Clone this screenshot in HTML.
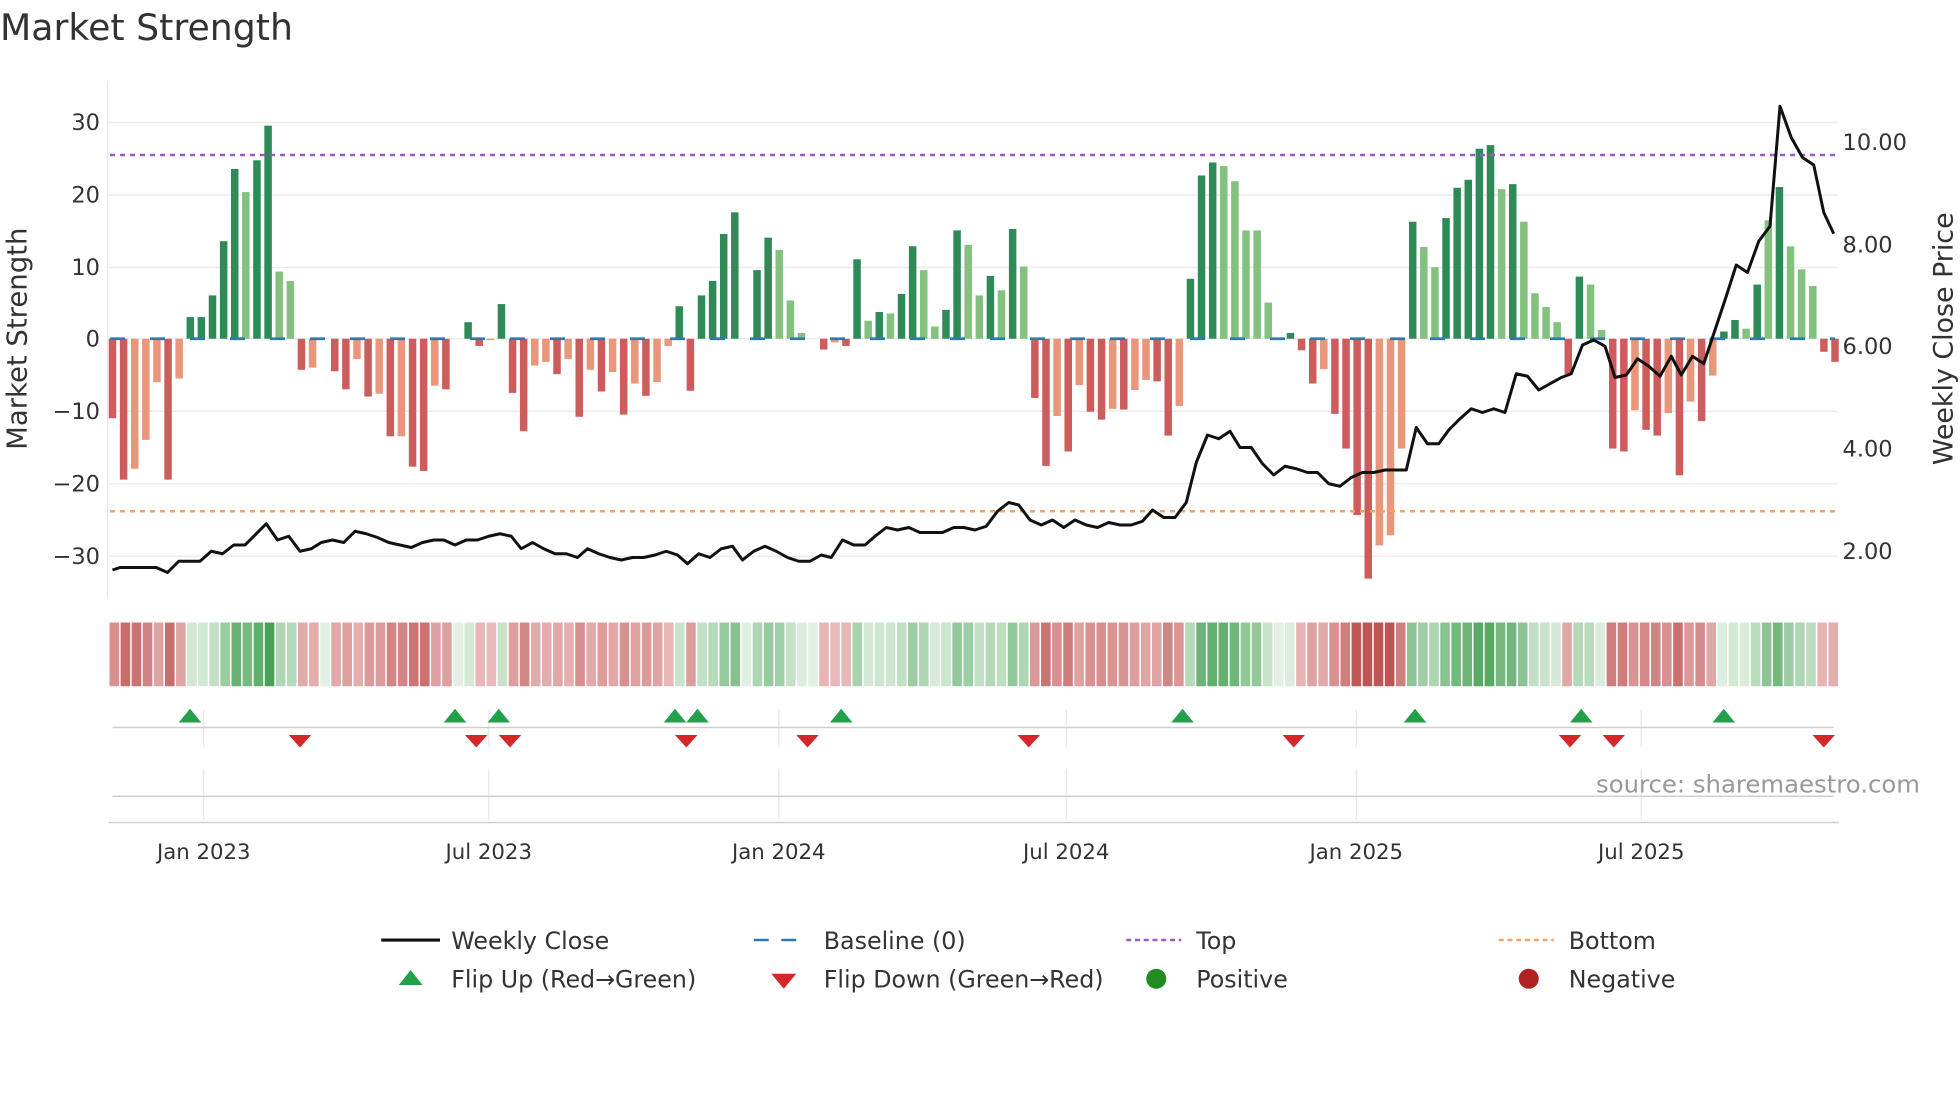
<!DOCTYPE html>
<html><head><meta charset="utf-8"><style>
html,body{margin:0;padding:0;background:#fff;width:1960px;height:1102px;overflow:hidden}
svg{display:block;font-family:"DejaVu Sans","Liberation Sans",sans-serif}
</style></head><body>
<svg id="s" width="1960" height="1102" viewBox="0 0 1568 881.6" xmlns="http://www.w3.org/2000/svg">
<text x="0" y="32" font-size="29" fill="#333">Market Strength</text>
<g id="grid" stroke="#ececf0" stroke-width="1.2"></g>
<line x1="86" y1="65" x2="86" y2="478" stroke="#e6e6e6" stroke-width="1"/>
<g font-size="18" fill="#333" text-anchor="end">
<text x="80" y="104">30</text><text x="80" y="162">20</text><text x="80" y="220">10</text><text x="80" y="277">0</text>
<text x="80" y="335">−10</text><text x="80" y="393">−20</text><text x="80" y="451">−30</text></g>
<g font-size="18" fill="#333">
<text x="1474" y="120">10.00</text><text x="1474" y="202">8.00</text><text x="1474" y="283">6.00</text><text x="1474" y="365">4.00</text><text x="1474" y="447">2.00</text></g>
<text transform="translate(21,271) rotate(-90)" font-size="22" fill="#333" text-anchor="middle">Market Strength</text>
<text transform="translate(1562,271) rotate(-90)" font-size="21.5" fill="#333" text-anchor="middle">Weekly Close Price</text>
<g id="bars"></g>
<line x1="88" y1="271" x2="1468" y2="271" stroke="#2b7bb0" stroke-width="2.2" stroke-dasharray="12,20"/>
<line x1="88" y1="124" x2="1470" y2="124" stroke="#9b59d0" stroke-width="2" stroke-dasharray="4,4"/>
<line x1="88" y1="409" x2="1470" y2="409" stroke="#f4a460" stroke-width="2" stroke-dasharray="4,4"/>
<polyline id="price" fill="none" stroke="#111" stroke-width="2.4" stroke-linejoin="round"/>
<g id="strip"></g>
<g id="vg" stroke="#e8e8e8" stroke-width="1"></g>
<line x1="90" y1="582" x2="1467" y2="582" stroke="#cfcfcf" stroke-width="1.2"/>
<line x1="90" y1="637" x2="1467" y2="637" stroke="#cfcfcf" stroke-width="1.2"/>
<line x1="87" y1="658" x2="1471" y2="658" stroke="#cfcfcf" stroke-width="1.2"/>
<g id="flips"></g>
<text x="1536" y="634" font-size="19.5" fill="#999" text-anchor="end">source: sharemaestro.com</text>
<g font-size="17" fill="#333" text-anchor="middle">
<text x="163" y="687">Jan 2023</text><text x="391" y="687">Jul 2023</text><text x="623" y="687">Jan 2024</text>
<text x="853" y="687">Jul 2024</text><text x="1085" y="687">Jan 2025</text><text x="1313" y="687">Jul 2025</text></g>
<g font-size="19" fill="#333">
<line x1="305" y1="752" x2="352" y2="752" stroke="#111" stroke-width="2.5"/>
<text x="361" y="759">Weekly Close</text>
<line x1="603" y1="752" x2="647" y2="752" stroke="#2b7bb0" stroke-width="2" stroke-dasharray="12,10"/>
<text x="659" y="759">Baseline (0)</text>
<line x1="901" y1="752" x2="945" y2="752" stroke="#9b59d0" stroke-width="2" stroke-dasharray="4,3"/>
<text x="957" y="759">Top</text>
<line x1="1199" y1="752" x2="1243" y2="752" stroke="#f4a460" stroke-width="2" stroke-dasharray="4,3"/>
<text x="1255" y="759">Bottom</text>
<polygon points="319,788 338,788 328.5,776" fill="#22a04a"/>
<text x="361" y="790">Flip Up (Red→Green)</text>
<polygon points="617,779 637,779 627,791" fill="#d62728"/>
<text x="659" y="790">Flip Down (Green→Red)</text>
<circle cx="925" cy="783" r="8" fill="#228b22"/>
<text x="957" y="790">Positive</text>
<circle cx="1223" cy="783" r="8" fill="#b22222"/>
<text x="1255" y="790">Negative</text>
</g>
</svg>
<script>
var NS="http://www.w3.org/2000/svg";
function el(p,t,a){var e=document.createElementNS(NS,t);for(var k in a)e.setAttribute(k,a[k]);document.getElementById(p).appendChild(e);return e;}
[98,156,214,271,329,387,445].forEach(function(y){el("grid","line",{x1:87,y1:y,x2:1470,y2:y});});
var B=[[-11,1],[-19.5,1],[-18,0],[-14,0],[-6,0],[-19.5,1],[-5.5,0],[3,1],[3,1],[6,1],[13.5,1],[23.5,1],[20.3,0],[24.7,1],[29.5,1],[9.3,0],[8,0],[-4.3,1],[-4,0],[0,1],
[-4.5,1],[-7,1],[-2.8,0],[-8,1],[-7.6,0],[-13.5,1],[-13.5,0],[-17.7,1],[-18.3,1],[-6.5,0],[-7,1],[0,1],[2.3,1],[-1,1],[-0.2,0],[4.8,1],[-7.5,1],[-12.8,1],[-3.7,0],[-3.2,0],
[-4.9,1],[-2.8,0],[-10.8,1],[-4.3,0],[-7.3,1],[-4.6,0],[-10.5,1],[-6.2,0],[-7.9,1],[-6,0],[-1,0],[4.5,1],[-7.2,1],[6,1],[8,1],[14.5,1],[17.5,1],[0,1],[9.5,1],[14,1],
[12.3,0],[5.3,0],[0.8,0],[0,1],[-1.5,1],[-0.5,0],[-1,1],[11,1],[2.5,0],[3.7,1],[3.5,0],[6.2,1],[12.8,1],[9.5,0],[1.7,0],[4,1],[15,1],[13,0],[6,0],[8.7,1],[6.7,0],[15.2,1],[10,0],
[-8.2,1],[-17.6,1],[-10.7,0],[-15.6,1],[-6.4,0],[-10.1,1],[-11.2,1],[-9.7,0],[-9.8,1],[-7.1,0],[-5.7,0],[-5.9,1],[-13.4,1],[-9.3,0],[8.3,1],[22.6,1],[24.4,1],[23.9,0],[21.8,0],[15,0],[15,0],[5,0],[0,1],[0.8,1],
[-1.6,1],[-6.2,1],[-4.2,0],[-10.4,1],[-15.2,1],[-24.4,1],[-33.2,1],[-28.6,0],[-27.2,0],[-15.2,0],[16.2,1],[12.7,0],[9.9,0],[16.7,1],[20.9,1],[22,1],[26.3,1],[26.8,1],[20.7,0],[21.4,1],[16.2,0],[6.3,0],[4.4,0],[2.3,0],
[-4.9,1],[8.6,1],[7.5,0],[1.2,0],[-15.2,1],[-15.6,1],[-9.9,0],[-12.6,1],[-13.4,1],[-10.3,0],[-18.9,1],[-8.7,0],[-11.4,1],[-5.1,0],[1,1],[2.6,1],[1.4,0],[7.5,1],[16.4,0],[21,1],[12.8,0],[9.6,0],[7.3,0],[-1.8,1],[-3.2,1]];
var n=B.length,x0=90,x1=1468,dx=(x1-x0)/(n-1),S=5.78;
B.forEach(function(b,i){var v=b[0],x=x0+i*dx,c=v>=0?(b[1]?"#2e8b57":"#82c27e"):(b[1]?"#cd5c5c":"#e9967a");
 var h=Math.abs(v)*S;if(h>0.3)el("bars","rect",{x:x-3,y:v>=0?271-h:271,width:6,height:h,fill:c});
 var t=Math.min(1,Math.abs(v)/30);var r,g,bb;
 if(v>=0){r=225-(225-70)*t;g=240-(240-160)*t;bb=225-(225-85)*t;}else{t=Math.min(1,0.15+t);r=242-(242-190)*t;g=205-(205-85)*t;bb=205-(205-85)*t;}
 el("strip","rect",{x:87+i*(1384/n)+0.6,y:498,width:1384/n-1.2,height:51,fill:"rgb("+(r|0)+","+(g|0)+","+(bb|0)+")"});
});
var P="90,456 96,454 125,454 134,458 143,449 160,449 169,441 178,443 187,436 196,436 204,428 213,419 222,432 231,429 240,441 249,439 257,434 266,432 275,434 284,425 293,427 302,430 311,434 320,436 329,438 338,434 347,432 355,432 364,436 373,432 382,432 391,429 400,427 409,429 417,439 426,434 435,439 444,443 453,443 462,446 470,439 479,443 488,446 497,448 506,446 515,446 524,444 533,441 542,444 550,451 559,443 568,446 577,439 586,437 594,448 603,441 612,437 621,441 630,446 639,449 648,449 657,444 665,446 674,432 683,436 692,436 700,429 709,422 718,424 727,422 736,426 745,426 754,426 763,422 771,422 780,424 789,421 798,409 807,402 815,404 824,416 833,420 842,416 851,422 860,416 869,420 878,422 887,418 896,420 905,420 914,417 922,408 931,414 940,414 949,402 957,370 966,348 975,351 984,345 992,358 1001,358 1010,371 1019,380 1028,373 1037,375 1046,378 1054,378 1063,387 1072,389 1081,382 1090,378 1099,378 1108,376 1117,376 1125,376 1133,342 1142,355 1151,355 1159,344 1168,335 1177,327 1186,330 1195,327 1204,330 1213,299 1222,301 1231,312 1240,307 1249,302 1257,299 1266,276 1275,272 1284,277 1292,302 1301,300 1310,287 1319,293 1328,301 1337,285 1345,300 1354,285 1363,291 1372,264 1381,237 1389,212 1398,218 1407,193 1416,181 1424,85 1433,110 1442,126 1451,132 1459,170 1467,187";
document.getElementById("price").setAttribute("points",P);
[163,391,623,853,1085,1313].forEach(function(x){el("vg","line",{x1:x,y1:568,x2:x,y2:598});el("vg","line",{x1:x,y1:615,x2:x,y2:656});});
[152,364,399,540,558,673,946,1132,1265,1379].forEach(function(x){el("flips","polygon",{points:(x-9)+",578 "+(x+9)+",578 "+x+",567",fill:"#22a04a"});});
[240,381,408,549,646,823,1035,1256,1291,1459].forEach(function(x){el("flips","polygon",{points:(x-9)+",588 "+(x+9)+",588 "+x+",598",fill:"#d62728"});});
</script>
</body></html>
